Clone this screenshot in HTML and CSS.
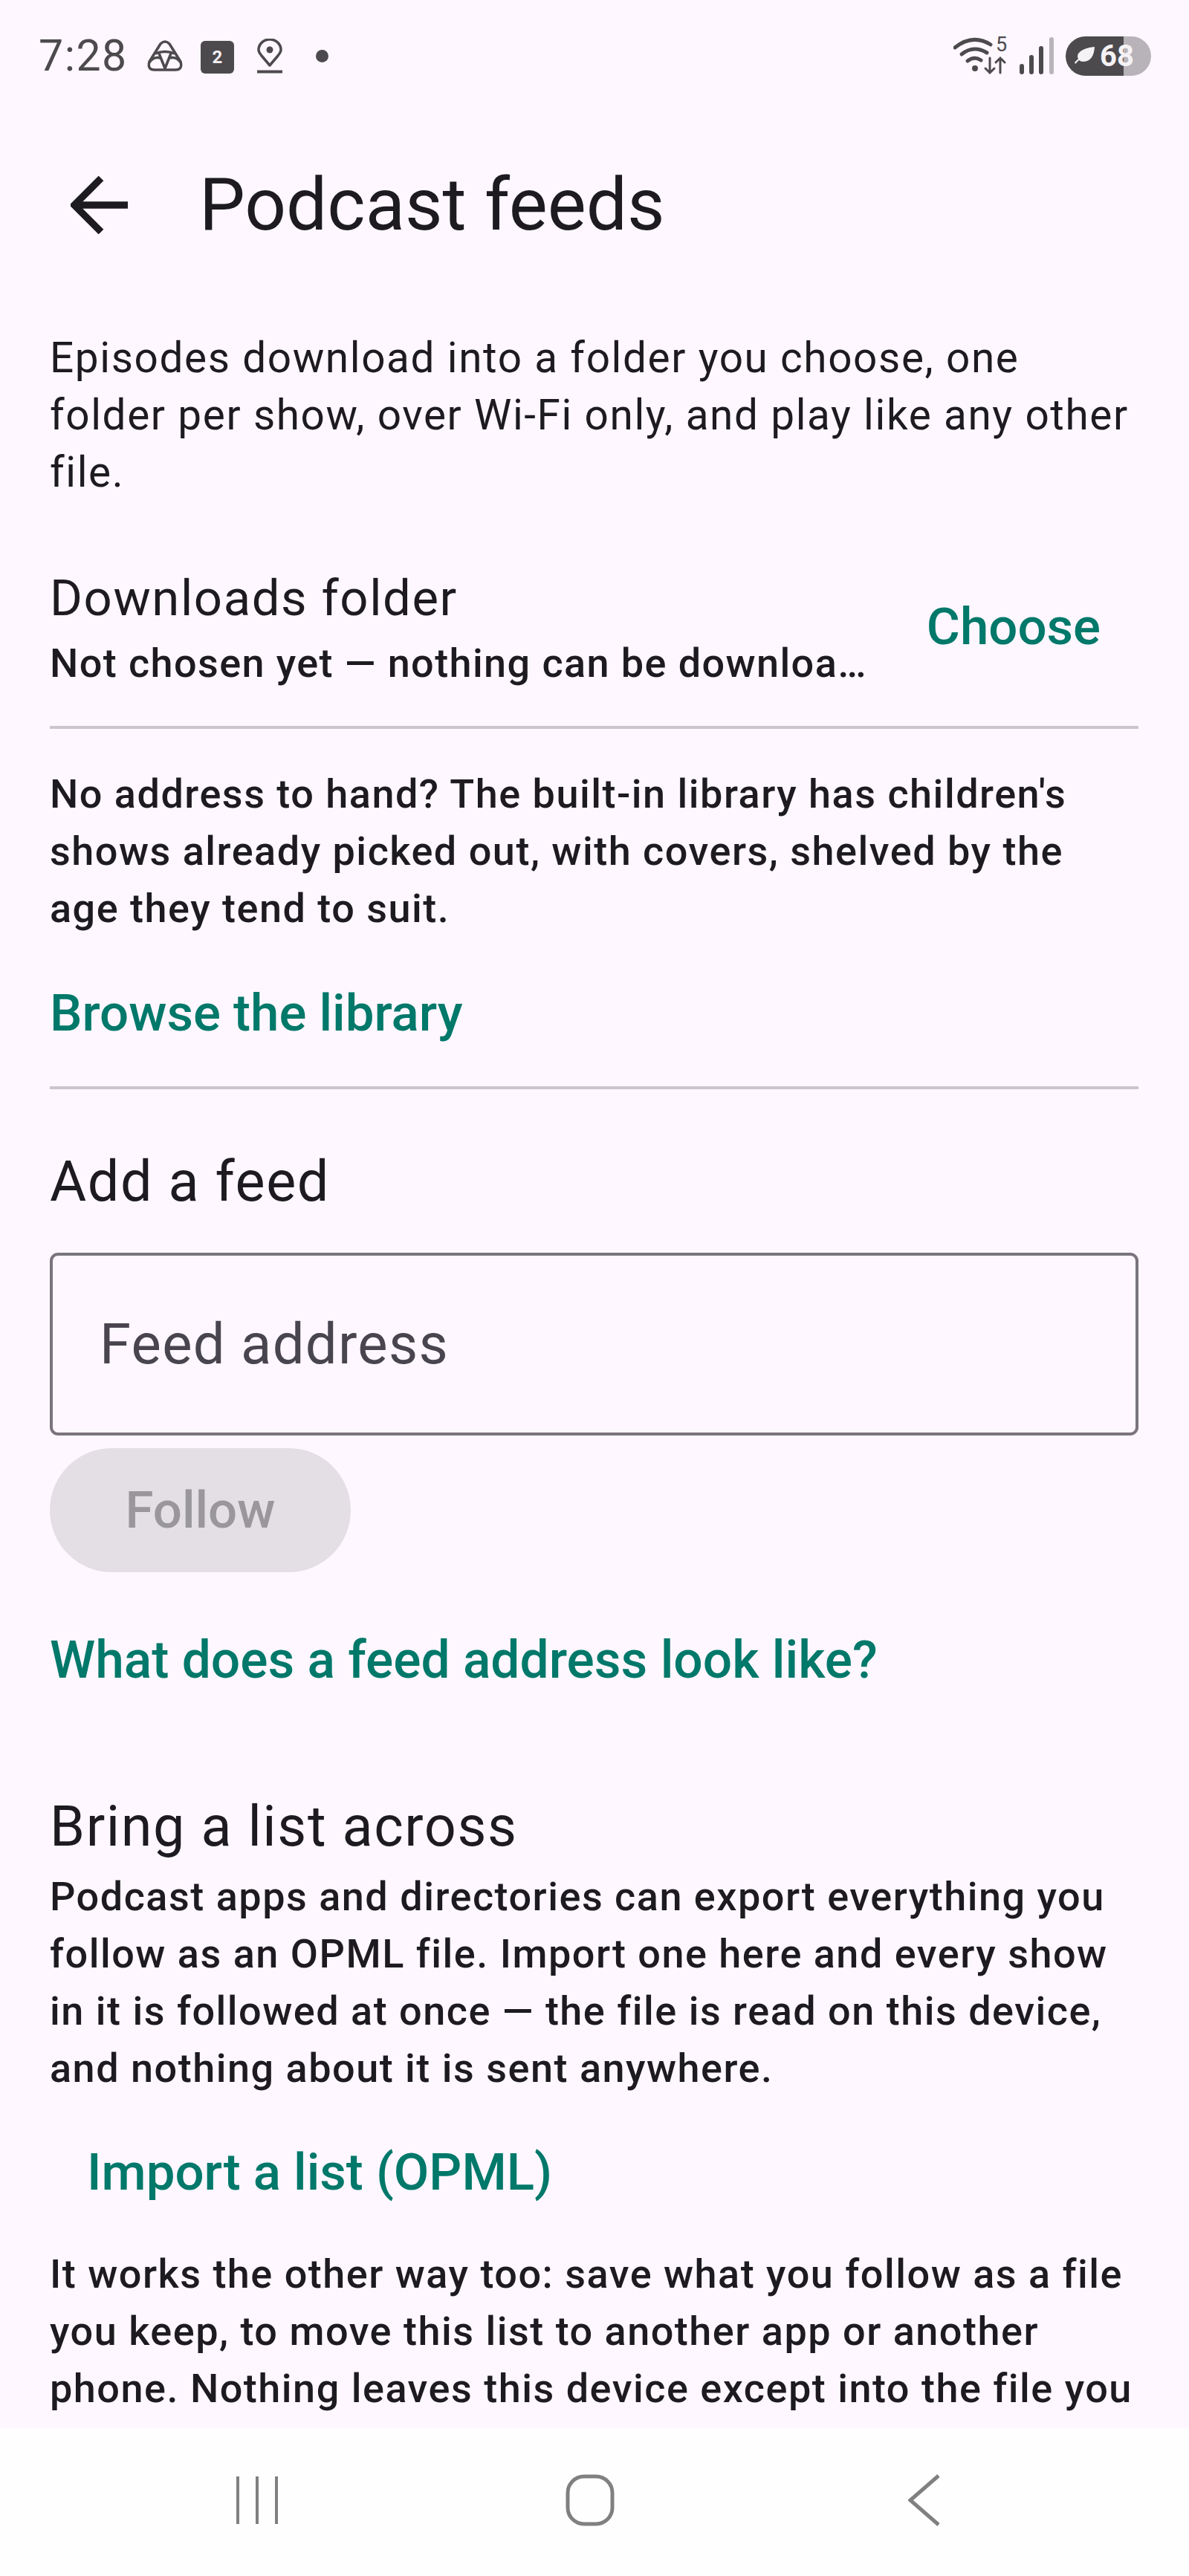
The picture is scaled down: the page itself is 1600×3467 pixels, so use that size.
FILE: index.html
```html
<!DOCTYPE html>
<html lang="en">
<head>
  <meta charset="UTF-8">
  <meta name="viewport" content="width=device-width, initial-scale=1">
  <title>Podcast feeds</title>
  <link rel="stylesheet" href="styles.css">
</head>
<body>
  <div class="screen">
    <div class="status-bar">
      <span class="clock">7:28</span>
      <svg class="ic-tri" width="48" height="42" viewBox="0 0 48 42" fill="none" stroke="#4d4a4e" stroke-width="3.500" stroke-linejoin="round">
        <path d="M18 5 Q24 -1 30 5 L45 29 Q48 40 38 40 H10 Q0 40 3 29 Z"/>
        <path d="M11 18 Q24 13 37 18"/>
        <path d="M16 18 L24 38 L32 18"/>
        <path d="M3 30 Q8 22 18 24 M45 30 Q40 22 30 24"/>
      </svg>
      <div class="ic-cal"><span>2</span></div>
      <svg class="ic-pin" width="34" height="47" viewBox="0 0 34 47" fill="none" stroke="#4d4a4e">
        <path d="M17 36 L6 23 Q2 18 2 15 A15 14 0 0 1 32 15 Q32 18 28 23 Z" stroke-width="3.500" stroke-linejoin="round"/>
        <circle cx="17" cy="15" r="4.500" fill="#4d4a4e" stroke="none"/>
        <path d="M0 44.500 H34" stroke-width="4"/>
      </svg>
      <span class="dot"></span>
      <div class="status-right">
        <svg class="ic-wifi" width="72" height="62" viewBox="0 -10 72 62" fill="none" stroke="#4d4a4e" stroke-linecap="round">
          <path d="M2 15 Q26 -4 50 11" stroke-width="5"/>
          <path d="M11 24 Q27 11 45 22" stroke-width="5"/>
          <path d="M19 33 Q28 26 37 32" stroke-width="5"/>
          <circle cx="29" cy="43" r="4" fill="#4d4a4e" stroke="none"/>
          <text x="57" y="20" class="wifi-five">5</text>
          <path d="M49 29 V49 M43 43 L49 49 L55 43 M63 49 V29 M57 35 L63 29 L69 35" stroke-width="3"/>
        </svg>
        <svg class="ic-signal" width="46" height="50" viewBox="0 0 46 50" fill="none" stroke-width="6" stroke-linecap="round">
          <path d="M3 39 V47 M16 27 V47 M29 15 V47" stroke="#4d4a4e"/>
          <path d="M43 3 V47" stroke="#b9b5bb"/>
        </svg>
        <div class="battery">
          <svg width="28" height="26" viewBox="0 0 28 26" fill="#f5f2f5"><path d="M27 1 Q26 20 12 21 Q8 21 6 19 L1 24 L0 22 L5 17 Q2 12 8 7 Q15 2 27 1Z"/></svg>
          <span>68</span>
        </div>
      </div>
    </div>

    <div class="toolbar">
      <svg class="ic-back" width="78" height="78" viewBox="0 0 78 78" fill="none" stroke="#1d1b20" stroke-width="9.500">
        <path d="M77 39 H4 M41 3 L5 39 L41 75"/>
      </svg>
      <h1>Podcast feeds</h1>
    </div>

    <main class="content">
      <p class="body-lg intro">Episodes download into a folder you choose, one folder per show, over Wi-Fi only, and play like any other file.</p>

      <div class="folder-row">
        <div class="folder-text">
          <div class="title">Downloads folder</div>
          <div class="body-md folder-sub">Not chosen yet — nothing can be downloa…</div>
        </div>
        <a class="link choose">Choose</a>
      </div>
      <hr class="divider first">

      <p class="body-md">No address to hand? The built-in library has children's shows already picked out, with covers, shelved by the age they tend to suit.</p>
      <a class="link browse">Browse the library</a>
      <hr class="divider second">

      <h2 class="section-title add-title">Add a feed</h2>
      <div class="field"><span>Feed address</span></div>
      <button class="follow-btn" disabled>Follow</button>
      <a class="link feed-help">What does a feed address look like?</a>

      <h2 class="section-title list-title">Bring a list across</h2>
      <p class="body-md list-text">Podcast apps and directories can export everything you follow as an OPML file. Import one here and every show in it is followed at once — the file is read on this device, and nothing about it is sent anywhere.</p>
      <a class="link import">Import a list (OPML)</a>
      <p class="body-md export-text">It works the other way too: save what you follow as a file you keep, to move this list to another app or another phone. Nothing leaves this device except into the file you</p>
    </main>

    <nav class="nav-bar">
      <svg width="58" height="66" viewBox="0 0 58 66" fill="none" stroke="#808080" stroke-width="4">
        <path d="M3 1 V65 M29 1 V65 M55 1 V65"/>
      </svg>
      <svg class="nav-home" width="66" height="70" viewBox="0 0 66 70" fill="none" stroke="#808080" stroke-width="5">
        <rect x="3" y="3" width="60" height="64" rx="22"/>
      </svg>
      <svg class="nav-back" width="44" height="70" viewBox="0 0 44 70" fill="none" stroke="#808080" stroke-width="5">
        <path d="M41 2 L3 35 L41 68"/>
      </svg>
    </nav>
  </div>
</body>
</html>
```

FILE: styles.css
```css
* {
  box-sizing: border-box;
}

body {
  margin: 0;
  background-color: #fef7ff;
  color: #1d1b20;
  font-family: Roboto, "Noto Sans", sans-serif;
}

.screen {
  width: 1600px;
  height: 3467px;
  display: flex;
  flex-direction: column;
  overflow: hidden;
}

/* status bar */
.status-bar {
  height: 150px;
  flex: none;
  display: flex;
  align-items: center;
  padding-left: 52px;
  color: #4d4a4e;
}

.clock {
  font-size: 59px;
  line-height: 60px;
  letter-spacing: 1.500px;
  width: 146px;
}

.ic-cal {
  width: 45px;
  height: 44px;
  margin: 3px 0 0 24px;
  background-color: #4d4a4e;
  border-radius: 6px;
  color: #f5f2f5;
  font-size: 24px;
  font-weight: 700;
  line-height: 44px;
  text-align: center;
}

.ic-pin {
  margin-left: 31px;
}

.dot {
  width: 17px;
  height: 17px;
  margin-left: 45px;
  border-radius: 50%;
  background-color: #4d4a4e;
}

.status-right {
  margin-left: auto;
  margin-right: 51px;
  display: flex;
  align-items: center;
}

.ic-wifi {
  margin-top: -10px;
}

.wifi-five {
  font-size: 27px;
  fill: #4d4a4e;
  stroke: none;
}

.ic-signal {
  margin-left: 17px;
}

.battery {
  width: 115px;
  height: 53px;
  margin-left: 16px;
  padding-left: 12px;
  display: flex;
  align-items: center;
  gap: 6px;
  border-radius: 27px;
  background: linear-gradient(to right, #4d4a4e 68%, #b7b3b9 68%);
}

.battery span {
  color: #f5f2f5;
  font-size: 40px;
  font-weight: 700;
}

/* toolbar */
.toolbar {
  height: 252px;
  flex: none;
  display: flex;
  align-items: center;
  padding-left: 95px;
}

.toolbar h1 {
  margin: 0 0 0 95px;
  font-size: 98px;
  font-weight: 400;
  line-height: 110px;
}

/* content */
.content {
  flex: 1;
  min-height: 0;
  overflow: hidden;
  padding: 41px 68px 0 67px;
}

p {
  margin: 0;
}

.body-lg {
  font-size: 56.700px;
  line-height: 77px;
  letter-spacing: 1.600px;
}

.body-md {
  font-size: 54px;
  font-weight: 500;
  line-height: 77px;
  letter-spacing: 1.500px;
}

.title {
  margin: 0;
  font-size: 67px;
  font-weight: 400;
  line-height: 77px;
  letter-spacing: 1.600px;
}

.section-title {
  margin: 0;
  font-size: 75.500px;
  font-weight: 400;
  line-height: 90px;
  letter-spacing: 1.600px;
}

.link {
  display: block;
  color: #00786a;
  font-size: 69px;
  font-weight: 500;
  line-height: 77px;
}

.folder-row {
  margin-top: 93px;
  display: flex;
  align-items: center;
  justify-content: space-between;
}

.folder-sub {
  margin-top: 10px;
  letter-spacing: 1.400px;
  white-space: nowrap;
}

.choose {
  margin: 0 51px 12px 0;
}

.divider {
  height: 4px;
  margin: 0;
  border: none;
  background-color: #cac6cc;
}

.divider.first {
  margin: 46px 0 49px;
}

.browse {
  margin-top: 64px;
}

.divider.second {
  margin-top: 60px;
}

.add-title {
  margin-top: 79px;
}

.field {
  height: 246px;
  margin-top: 51px;
  padding-left: 63px;
  display: flex;
  align-items: center;
  border: 4px solid #79747e;
  border-radius: 11px;
  color: #49454f;
  font-size: 76px;
  letter-spacing: 1.300px;
}

.follow-btn {
  display: block;
  width: 405px;
  height: 167px;
  margin-top: 17px;
  border: none;
  border-radius: 84px;
  background-color: #e3dfe4;
  color: #9a979c;
  font-family: inherit;
  font-size: 69px;
  font-weight: 500;
}

.feed-help {
  margin-top: 80px;
  font-size: 69.500px;
}

.list-title {
  margin-top: 140px;
}

.list-text {
  margin-top: 11px;
}

.import {
  margin: 63px 0 0 50px;
}

.export-text {
  margin-top: 60px;
}

/* nav bar */
.nav-bar {
  height: 199px;
  flex: none;
  display: flex;
  align-items: center;
  padding: 0 0 5px 317px;
  background-color: #fefefe;
}

.nav-home {
  margin-left: 386px;
}

.nav-back {
  margin-left: 395px;
}
```
